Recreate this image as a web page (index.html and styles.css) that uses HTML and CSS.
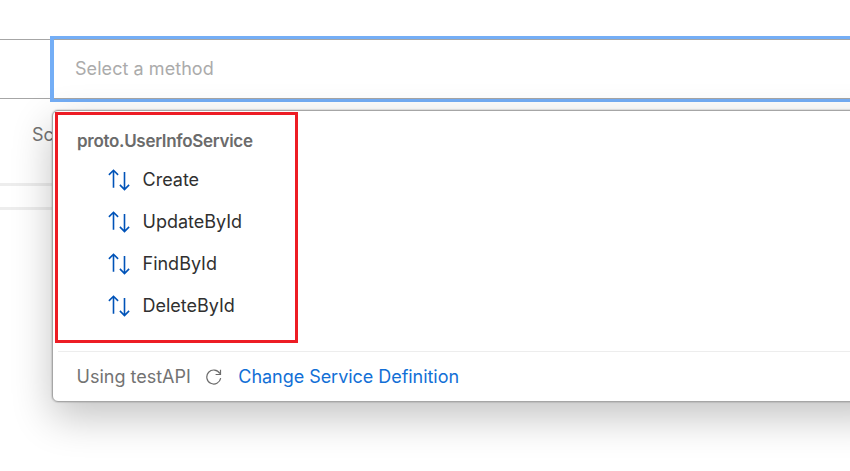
FILE: index.html
```html
<!DOCTYPE html>
<html lang="en">
<head>
<meta charset="utf-8">
<title>Select a method</title>
<link rel="stylesheet" href="styles.css">
</head>
<body>
<svg class="defs" width="0" height="0"><symbol id="arrows" viewBox="0 0 24 22"><path d="M6.5 18.7V1.5M1.9 5.9l4.6-4.6 4.6 4.6M17.5 3v17.2M12.9 15.9l4.6 4.6 4.6-4.6"/></symbol></svg>
<main class="request">
  <div class="request-bar">
    <div class="url"></div>
    <div class="method">
      <span class="placeholder">Select a method</span>
      <section class="menu">
        <div class="service">
          <h2>proto.UserInfoService</h2>
          <ul>
            <li><svg class="arrows"><use href="#arrows"/></svg><span>Create</span></li>
            <li><svg class="arrows"><use href="#arrows"/></svg><span>UpdateById</span></li>
            <li><svg class="arrows"><use href="#arrows"/></svg><span>FindById</span></li>
            <li><svg class="arrows"><use href="#arrows"/></svg><span>DeleteById</span></li>
          </ul>
          <div class="highlight"></div>
        </div>
        <footer>
          <span class="using">Using</span><span class="api">testAPI</span>
          <svg class="refresh" viewBox="0 0 16 16"><path d="M14.7 9.2A7 7 0 1 1 13.8 4.4M14.5.7v4.8H9.6"/></svg>
          <a class="change">Change Service Definition</a>
        </footer>
      </section>
    </div>
  </div>
  <div class="tabs">Sc</div>
  <div class="panel-header"></div>
</main>
</body>
</html>
```
FILE: styles.css
```css
* { box-sizing: border-box; }
body {
  margin: 0;
  height: 471px;
  overflow: hidden;
  background: #fff;
  color: #737373;
  font: 18px/24px Inter, "Liberation Sans", sans-serif;
}
.defs { display: none; }
.request { padding-top: 36px; }
.request-bar { display: flex; height: 66px; }
.url {
  width: 50px;
  margin: 3px 0;
  border: solid #a6a6a6;
  border-width: 1px 0;
}
.method {
  position: relative;
  flex: 1;
  display: flex;
  align-items: center;
  padding-left: 21px;
  border: solid #74aef6;
  border-width: 3px 0 3px 4px;
  box-shadow: inset 0 1px #a6a6a6, inset 0 -1px #a6a6a6;
}
.placeholder { color: #ababab; letter-spacing: 0.06px; }
.menu {
  position: absolute;
  top: 71px;
  left: -2px;
  width: 840px;
  height: 292px;
  padding-left: 5px;
  background: #fff;
  border: 1px solid #a6a6a6;
  border-radius: 6px;
  box-shadow: 0 0 1px 1px rgba(0, 0, 0, .1), 0 15px 40px rgba(0, 0, 0, .24);
}
.service { position: relative; height: 240px; padding: 18px 0 0 19px; }
h2 { margin: 0; color: #6b6b6b; font-size: 17px; line-height: 24px; font-weight: 600; letter-spacing: -0.3px; }
ul { margin: 6px 0 0; padding: 0 0 0 30px; list-style: none; color: #303030; }
li { display: flex; align-items: center; height: 42px; }
.arrows { width: 24px; height: 22px; margin-right: 11.5px; fill: none; stroke: #0053b8; stroke-width: 1.6; }
.highlight {
  position: absolute;
  top: 1px;
  left: -3px;
  width: 243px;
  height: 231px;
  border: 3px solid #ed1c24;
}
footer {
  display: flex;
  align-items: center;
  height: 50px;
  padding-left: 18.5px;
  border-top: 1px solid #ededed;
}
.using { margin-right: 5px; }
.refresh { width: 16px; height: 16px; margin: 0 16px 0 15.5px; fill: none; stroke: #6b6b6b; stroke-width: 1.2; }
.change { color: #126fd6; letter-spacing: -0.04px; }
.tabs { height: 81px; padding: 21px 0 0 32px; }
.panel-header { height: 27px; border: solid #ededed; border-width: 3px 0; }
```
